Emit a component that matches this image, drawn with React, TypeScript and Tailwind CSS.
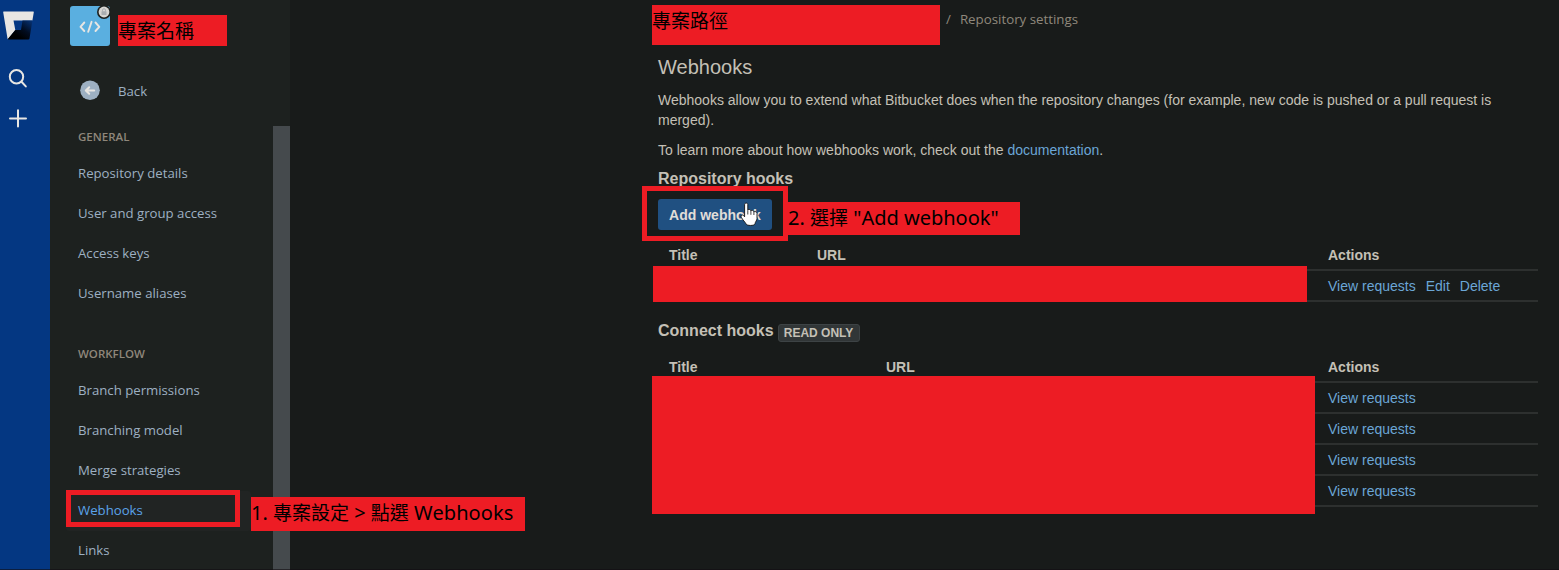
import React from "react";

const uiFont = "font-['Open_Sans','Noto_Sans_CJK_TC',sans-serif]";
const bodyFont = "font-['Liberation_Sans',Arial,sans-serif]";
const noteFont = "font-['Noto_Sans','Noto_Sans_CJK_TC',sans-serif]";

function NavRail() {
  return (
    <nav className="flex w-[50px] shrink-0 flex-col bg-[#043782] pt-[11px]">
      <svg className="ml-[3px] h-[29px] w-[31px]" viewBox="0 0 31 29">
        <defs>
          <linearGradient id="shade" gradientUnits="userSpaceOnUse" x1="28" y1="8" x2="15" y2="25">
            <stop offset="0" stopColor="#06357c" />
            <stop offset="0.6" stopColor="#010c20" />
            <stop offset="1" stopColor="#000" />
          </linearGradient>
        </defs>
        <path d="M0.8 0.5H30.2Q31 0.5 30.8 1.3L29.4 9.5H10.5L12.3 19L5 28.2Q4.6 28 4.5 27.5L0.2 1.3Q0 0.5 0.8 0.5Z" fill="#e8e6e3" />
        <path d="M19.5 9.5H29.4L26.5 27.5Q26.3 28.4 25.3 28.4H5.5L4.8 28.1L12.3 19H18Z" fill="url(#shade)" />
      </svg>
      <svg className="mt-[28px] ml-[8px] size-[20px]" viewBox="0 0 20 20" fill="none" stroke="#e8e6e3" strokeWidth="2" strokeLinecap="round">
        <circle cx="8.5" cy="8.8" r="6.7" />
        <path d="M13.5 13.8L17.8 18.4" />
      </svg>
      <svg className="mt-[20px] ml-[8px] size-[20px]" viewBox="0 0 20 20" fill="none" stroke="#e8e6e3" strokeWidth="2" strokeLinecap="round">
        <path d="M10 2.2V18.6M2 10.5H18" />
      </svg>
    </nav>
  );
}

function NavGroup({ title }: { title: string }) {
  return <h2 className="flex h-[20px] items-center pl-7 text-[11.5px] font-semibold text-[#8f877b]">{title}</h2>;
}

function NavItem({ label, active }: { label: string; active?: boolean }) {
  return (
    <a
      className={
        active
          ? "mx-4 flex h-10 w-[185px] items-center rounded-[3px] bg-[#212423] pl-3 text-[13.2px] text-[#5ba3ea]"
          : "mx-4 flex h-10 w-[185px] items-center pl-3 text-[13.2px] text-[#9db0c2]"
      }
    >
      {label}
    </a>
  );
}

function Sidebar() {
  return (
    <aside className={`flex w-[240px] shrink-0 flex-col bg-[#1d211f] ${uiFont}`}>
      <header className="flex h-[70px] shrink-0 pt-[6px] pl-5">
        <div className="relative h-[40px] w-[40px] rounded-[3px] bg-[#5aafe0]">
          <svg className="size-[40px]" viewBox="0 0 40 40" fill="none" stroke="#e8e6e3" strokeWidth="1.9" strokeLinecap="round" strokeLinejoin="round">
            <path d="M14.3 16.5L10.5 20.8L14.3 25M25.5 16.5L29.3 20.8L25.5 25M21.6 15.8L18.2 25.8" />
          </svg>
          <svg className="absolute -top-[1px] left-[27px] size-[14px]" viewBox="0 0 14 14">
            <circle cx="7" cy="7" r="7" fill="#1d211f" />
            <circle cx="7" cy="7" r="5.4" fill="#d6d5d2" />
            <rect x="4.5" y="6.2" width="5" height="3.8" rx="0.6" fill="#a9adb0" />
            <path d="M5.5 6.5V5.2a1.5 1.5 0 0 1 3 0V6.5" fill="none" stroke="#a9adb0" />
          </svg>
        </div>
      </header>
      <div className="flex h-[56px] shrink-0 items-start pt-[10px] pl-[30px]">
        <svg className="size-[20px]" viewBox="0 0 20 20">
          <circle cx="10" cy="10.2" r="9.8" fill="#9db0c2" />
          <path d="M14.2 10.5H6M9.2 7.2L5.8 10.5L9.2 13.8" fill="none" stroke="#e8e6e3" strokeWidth="2" strokeLinecap="round" strokeLinejoin="round" />
        </svg>
        <span className="ml-[18px] text-[13.2px] leading-[22px] text-[#9db0c2]">Back</span>
      </div>
      <div className="flex h-[444px] justify-between">
        <div className="pt-[1px]">
          <NavGroup title="GENERAL" />
          <div className="pt-[7px]">
            <NavItem label="Repository details" />
            <NavItem label="User and group access" />
            <NavItem label="Access keys" />
            <NavItem label="Username aliases" />
          </div>
          <div className="pt-[30px]">
            <NavGroup title="WORKFLOW" />
          </div>
          <div className="pt-[7px]">
            <NavItem label="Branch permissions" />
            <NavItem label="Branching model" />
            <NavItem label="Merge strategies" />
            <NavItem label="Webhooks" active />
            <NavItem label="Links" />
          </div>
        </div>
        <div className="h-full w-[17px] bg-[#454a4d]" />
      </div>
    </aside>
  );
}

function HookTable({ urlOffset, rows }: { urlOffset: "near" | "far"; rows: string[][] }) {
  const cols = urlOffset === "near" ? "grid-cols-[148px_511px_1fr]" : "grid-cols-[217px_442px_1fr]";
  return (
    <div>
      <div className={`grid h-[31px] items-center border-b-2 border-[#2d302f] pl-[11px] text-sm font-bold text-[#c4c0b6] ${cols}`}>
        <span>Title</span>
        <span>URL</span>
        <span>Actions</span>
      </div>
      {rows.map((actions, i) => (
        <div key={i} className="flex h-[31px] items-center gap-[10px] border-b-2 border-[#2d302f] pl-[670px] text-sm text-[#6ba6d6]">
          {actions.map((a) => (
            <a key={a}>{a}</a>
          ))}
        </div>
      ))}
    </div>
  );
}

function Main() {
  return (
    <main className={`flex-1 bg-[#181b1a] pr-[21px] pl-[368px] text-sm text-[#c4c0b6] ${bodyFont}`}>
      <div className={`flex h-[54px] items-start pt-[9px] pl-[288px] text-[13.3px] leading-5 text-[#8f887c] ${uiFont}`}>
        <span>/</span>
        <span className="ml-[9px]">Repository settings</span>
      </div>
      <h1 className="h-[36px] text-[20px] leading-[26px]">Webhooks</h1>
      <p className="leading-5">
        Webhooks allow you to extend what Bitbucket does when the repository changes (for example, new code is pushed or a pull request is merged).
      </p>
      <p className="mt-[10px] leading-5">
        To learn more about how webhooks work, check out the <a className="text-[#6ba6d6]">documentation</a>.
      </p>
      <h2 className="mt-[9px] text-base leading-5 font-bold">Repository hooks</h2>
      <button className="mt-[10px] block h-[31px] w-[114px] rounded-[3px] bg-[#205081] text-sm font-bold text-[#e0ded9]">Add webhook</button>
      <div className="mt-[10px]">
        <HookTable urlOffset="near" rows={[["View requests", "Edit", "Delete"]]} />
      </div>
      <div className="mt-[19px] flex h-5 items-center">
        <h2 className="text-base font-bold">Connect hooks</h2>
        <span className="mt-[3px] ml-[4px] flex h-[18px] w-[82px] items-center justify-center rounded-[3px] border border-[#3d4345] bg-[#313637] text-xs font-bold">READ ONLY</span>
      </div>
      <div className="mt-[11px]">
        <HookTable urlOffset="far" rows={[["View requests"], ["View requests"], ["View requests"], ["View requests"]]} />
      </div>
    </main>
  );
}

function Annotations() {
  return (
    <div className={`pointer-events-none absolute inset-0 whitespace-nowrap text-black ${noteFont}`}>
      <div className="absolute top-[15px] left-[118px] h-[31px] w-[109px] bg-[#ed1c24] text-[19px] leading-[33px]">專案名稱</div>
      <div className="absolute top-[5px] left-[652px] h-[40px] w-[288px] bg-[#ed1c24] text-[19px] leading-[33px]">專案路徑</div>
      <div className="absolute top-[490px] left-[66px] h-[37px] w-[174px] border-[5px] border-[#ed1c24]" />
      <div className="absolute top-[497px] left-[251px] h-[34px] w-[274px] bg-[#ed1c24] text-[20px] leading-[32px]">
        1. <span className="text-[19px]">專案設定</span> &gt; <span className="text-[19px]">點選</span> <span className="tracking-[0.1px]">Webhooks</span>
      </div>
      <div className="absolute top-[186px] left-[642px] h-[55px] w-[146px] border-[5px] border-[#ed1c24]" />
      <div className="absolute top-[202px] left-[788px] h-[33px] w-[232px] bg-[#ed1c24] text-[20px] leading-[32px]">
        2. <span className="text-[19px]">選擇</span> "Add webhook"
      </div>
      <div className="absolute top-[266px] left-[653px] h-[36px] w-[654px] bg-[#ed1c24]" />
      <div className="absolute top-[376px] left-[652px] h-[138px] w-[663px] bg-[#ed1c24]" />
      <svg className="absolute top-[202px] left-[740px] h-[25px] w-[18px]" viewBox="0 0 18 25">
        <path d="M4.6 2.6C4.6 .6 7.8.6 7.8 2.6V8.2C8.4 7.1 10.6 7.2 10.9 8.8C11.7 8 13.7 8.3 13.9 9.8C15 9.2 17 9.7 17 11.4V16.5C17 18.5 15.2 19.8 15 21.8C14.8 24 6.4 24 6 21.8C5 20 3.2 18.5 1.2 15.2C.4 13.4 2.2 12.2 3.6 13.6L4.6 14.8Z" fill="#fff" stroke="#111" strokeWidth="0.9" />
        <path d="M7.8 8.5V12.5M10.9 9V12.8M13.9 10V13" stroke="#111" strokeWidth="0.8" />
      </svg>
      <div className="absolute inset-x-0 bottom-0 h-px bg-[#120d13]/60" />
    </div>
  );
}

export default function App() {
  return (
    <div className="relative flex h-[570px] w-[1559px] overflow-hidden bg-[#181b1a]">
      <NavRail />
      <Sidebar />
      <Main />
      <Annotations />
    </div>
  );
}
